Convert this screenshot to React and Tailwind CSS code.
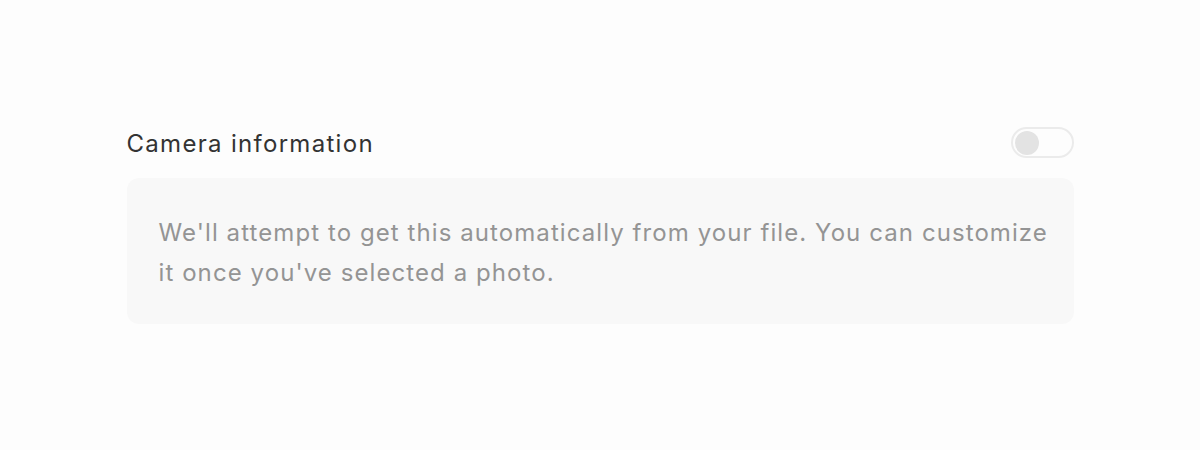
export default function App() {
  return (
    <div className="w-[1200px] h-[450px] bg-[#fdfdfd] flex justify-center" style={{ fontFamily: "Inter, 'Noto Sans', sans-serif" }}>
      <div className="w-[947px] pt-[128px] flex flex-col">
        <div className="flex items-center justify-between h-[32px]">
          <span className="text-[24px] leading-[32px] text-[#333333] tracking-[1.3px]">Camera information</span>
          <div className="w-[63px] h-[31px] -mt-[3px] rounded-full border-2 border-[#ebebeb] bg-[#fdfdfd] flex items-center px-[2px]">
            <div className="w-[24px] h-[24px] rounded-full bg-[#e3e3e3]" />
          </div>
        </div>
        <div className="mt-[18px] bg-[#f8f8f8] rounded-[12px] pl-[32px] pr-[10px] pt-[35px] pb-[31px]">
          <p className="text-[24px] leading-[40px] text-[#949494] tracking-[1.08px]">
            We'll attempt to get this automatically from your file. You can customize it once you've selected a photo.
          </p>
        </div>
      </div>
    </div>
  );
}
